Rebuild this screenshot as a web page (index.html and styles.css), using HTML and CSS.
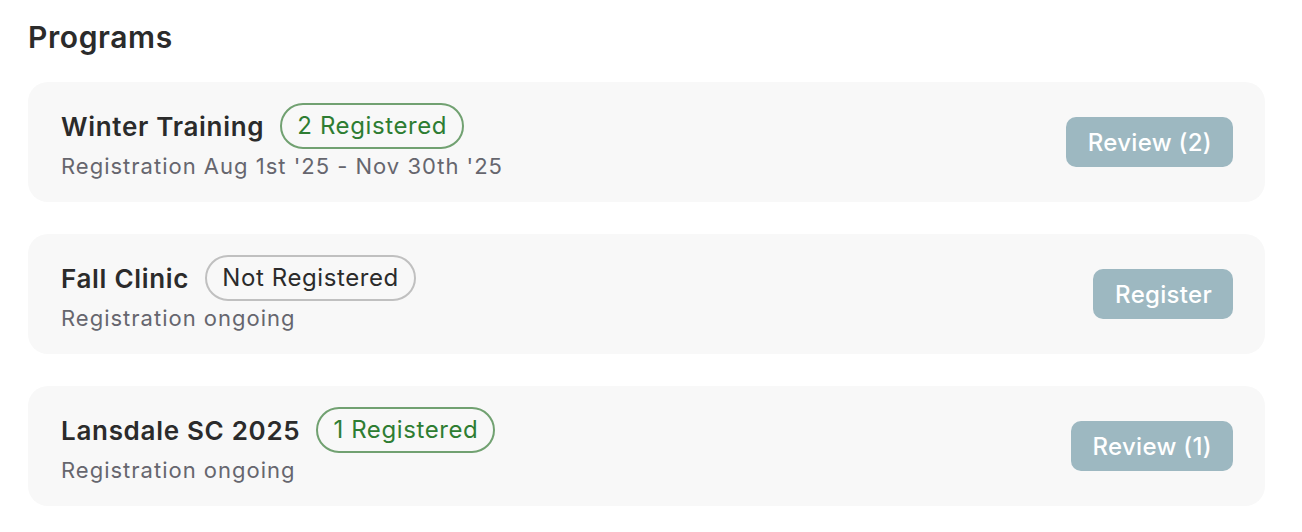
FILE: index.html
```html
<!DOCTYPE html>
<html lang="en">
<head>
  <meta charset="UTF-8">
  <meta name="viewport" content="width=device-width, initial-scale=1.0">
  <title>Programs</title>
  <link rel="stylesheet" href="styles.css">
</head>
<body>
  <div class="page">
    <h2 class="page-title">Programs</h2>

    <div class="program-list">
      <div class="program-card">
        <div class="program-info">
          <div class="program-head">
            <span class="program-name">Winter Training</span>
            <span class="badge badge-registered">2 Registered</span>
          </div>
          <div class="program-dates">Registration Aug 1st '25 - Nov 30th '25</div>
        </div>
        <button class="action-btn">Review (2)</button>
      </div>

      <div class="program-card">
        <div class="program-info">
          <div class="program-head">
            <span class="program-name">Fall Clinic</span>
            <span class="badge">Not Registered</span>
          </div>
          <div class="program-dates">Registration ongoing</div>
        </div>
        <button class="action-btn">Register</button>
      </div>

      <div class="program-card">
        <div class="program-info">
          <div class="program-head">
            <span class="program-name">Lansdale SC 2025</span>
            <span class="badge badge-registered">1 Registered</span>
          </div>
          <div class="program-dates">Registration ongoing</div>
        </div>
        <button class="action-btn">Review (1)</button>
      </div>
    </div>
  </div>
</body>
</html>
```

FILE: styles.css
```css
body {
  font-family: Inter, 'Noto Sans', sans-serif;
  background: #ffffff;
  color: #2b2b2b;
  margin: 0;
}
.page {
  padding: 17px 37px 0 28px;
}
.page-title {
  font-size: 30px;
  font-weight: 600;
  letter-spacing: 0.6px;
  margin: 0 0 25px;
  line-height: 40px;
}
.program-list {
  display: flex;
  flex-direction: column;
  gap: 32px;
}
.program-card {
  display: flex;
  align-items: center;
  justify-content: space-between;
  background: #f8f8f8;
  border-radius: 20px;
  padding: 21px 32px 21px 33px;
}
.program-head {
  display: flex;
  align-items: center;
  gap: 16px;
}
.program-name {
  font-size: 26px;
  font-weight: 600;
  letter-spacing: 0.7px;
  color: #2b2b2b;
}
.badge {
  font-size: 24px;
  line-height: 28px;
  letter-spacing: 0.6px;
  padding: 7px 15px;
  border: 2px solid #c0c0c0;
  border-radius: 999px;
  color: #2b2b2b;
}
.badge-registered {
  border-color: #71a171;
  color: #2e7d32;
}
.program-dates {
  font-size: 22px;
  line-height: 30px;
  letter-spacing: 1px;
  color: #66666e;
  margin-top: 2px;
}
.action-btn {
  font-family: inherit;
  font-size: 24px;
  font-weight: 500;
  letter-spacing: 0.3px;
  color: #ffffff;
  background: #9db8c1;
  border: none;
  border-radius: 10px;
  padding: 0 21px 0 22px;
  height: 50px;
  cursor: pointer;
}
```
